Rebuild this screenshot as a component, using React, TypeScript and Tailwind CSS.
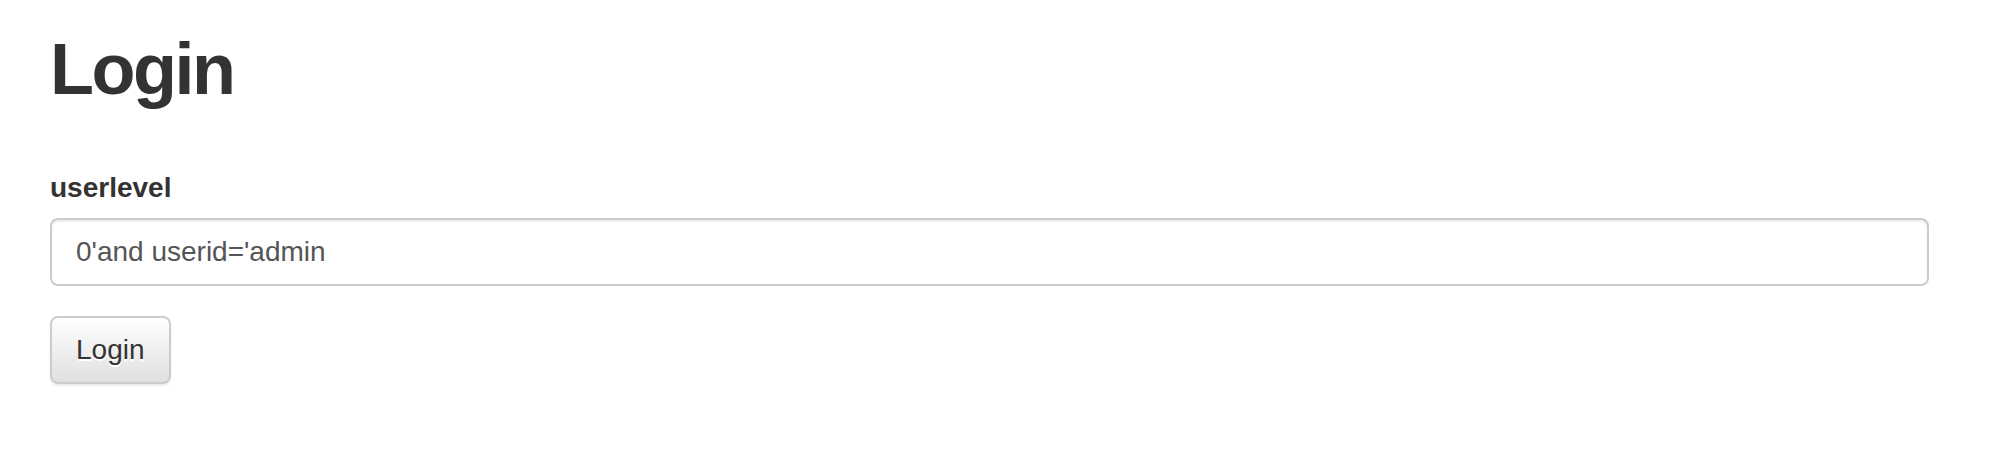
export default function App() {
  return (
    <main className="min-h-[476px] w-full bg-white pl-[50px] pr-[63px] pt-[30px] font-['Liberation_Sans',Arial,sans-serif] text-[#333]">
      {/* Page title */}
      <h1 className="text-[72px] font-bold leading-[79px] tracking-[-2.5px]">Login</h1>

      <form className="mt-[59px]" onSubmit={(e) => e.preventDefault()}>
        <div className="mb-[30px]">
          <label className="mb-[10px] block text-[28px] font-bold leading-[40px]">userlevel</label>
          <input
            type="text"
            defaultValue="0'and userid='admin"
            className="block h-[68px] w-full rounded-[8px] border-2 border-[#ccc] bg-white px-[24px] text-[28px] text-[#555] shadow-[inset_0_2px_2px_rgba(0,0,0,0.075)] outline-none"
          />
        </div>

        <button
          type="submit"
          className="h-[68px] rounded-[8px] border-2 border-[#ccc] bg-gradient-to-b from-white to-[#e0e0e0] px-[24px] text-[28px] leading-[40px] text-[#333] shadow-[0_2px_2px_rgba(0,0,0,0.075)] [text-shadow:0_2px_0_#fff]"
        >
          Login
        </button>
      </form>
    </main>
  )
}
